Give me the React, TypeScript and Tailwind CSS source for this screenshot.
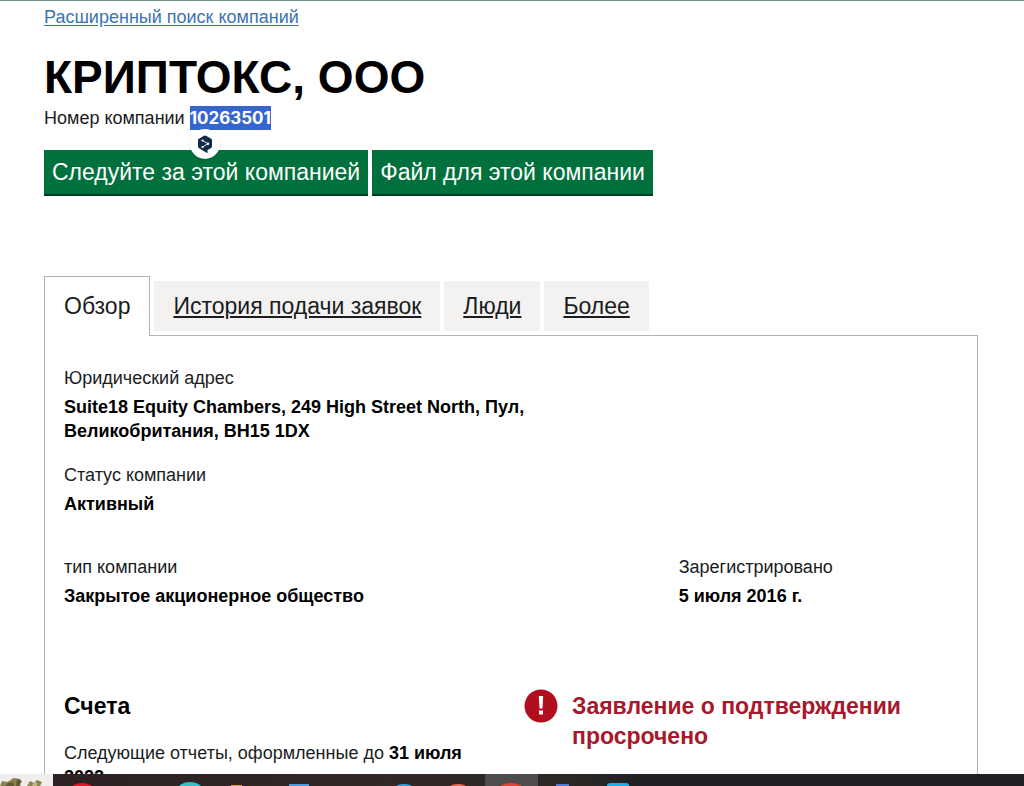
import type { ReactNode } from 'react';

const tabs = ['История подачи заявок', 'Люди', 'Более'];

function Field({ label, children }: { label: string; children: ReactNode }) {
    return (
        <dl>
            <dt className="mb-[5px] text-lg leading-6">{label}</dt>
            <dd className="text-lg leading-6 font-bold text-black">{children}</dd>
        </dl>
    );
}

function ActionButton({ children }: { children: ReactNode }) {
    return (
        <button
            type="button"
            className="h-[46px] border-b-2 border-[#00401f] bg-[#00703c] px-2 text-[23px] whitespace-nowrap text-white"
        >
            {children}
        </button>
    );
}

function TranslateBadge() {
    return (
        <button
            type="button"
            aria-label="Перевести"
            className="absolute top-[23px] left-0 flex h-[30px] w-[30px] items-center justify-center rounded-full bg-white shadow-sm"
        >
            <svg viewBox="0 0 16 19" className="h-[19px] w-4">
                <path
                    d="M7 .7a2 2 0 0 1 2 0l5.200 3a1.600 1.600 0 0 1 .8 1.400v6.400a1.600 1.600 0 0 1-.8 1.400L10.500 15v3.300L7 16.200l-5.200-3.200a1.600 1.600 0 0 1-.8-1.400V5.100a1.600 1.600 0 0 1 .8-1.400z"
                    fill="#0f2b46"
                />
                <path d="M5.500 5.500l5.500 3.200-5.500 3.300" fill="none" stroke="#fff" strokeWidth="0.9" />
                <circle cx="5.500" cy="5.500" r="1.100" fill="#fff" />
                <circle cx="11" cy="8.700" r="1.200" fill="#fff" />
                <circle cx="5.500" cy="12" r="1.100" fill="#fff" />
            </svg>
        </button>
    );
}

function Taskbar() {
    return (
        <footer className="flex h-3 shrink-0 bg-[#1f2024]">
            <svg viewBox="0 0 640 12" className="h-3 w-[640px] shrink-0">
                <defs>
                    <linearGradient id="bar">
                        <stop offset="0" stopColor="#2c2023" />
                        <stop offset="0.6" stopColor="#302824" />
                        <stop offset="0.9" stopColor="#2b2725" />
                        <stop offset="1" stopColor="#1f2024" />
                    </linearGradient>
                </defs>
                <rect width="640" height="12" fill="url(#bar)" />
                <rect width="53" height="12" fill="#eeeeec" />
                <path d="M0 12l2-5 5 1 4-2 2-2 8 1-3 3 3 4z" fill="#8b8250" />
                <path d="M5 12l3-3 5-1 1 4zM17 5l5 2-3 5h-3z" fill="#5f5a33" />
                <path d="M27 12l3-5 4 2 3-3 5 2-2 4z" fill="#8b8250" />
                <path d="M32 12l2-4 3 1v3z" fill="#c1b680" />
                <rect x="485" width="53" height="12" fill="#4d4b4b" />
                <ellipse cx="82" cy="15" rx="11" ry="6" fill="#e3152b" />
                <ellipse cx="190" cy="15" rx="12" ry="7" fill="#36bfc8" />
                <rect x="231" y="11" width="11" height="1" fill="#e1a83c" />
                <rect x="289" y="10" width="20" height="2" fill="#4c9be0" />
                <ellipse cx="404" cy="15" rx="10" ry="5" fill="#2f9fdb" />
                <ellipse cx="458" cy="15" rx="10" ry="5" fill="#e8694d" />
                <ellipse cx="511" cy="15" rx="12" ry="6" fill="#e34334" />
                <rect x="556" y="10" width="13" height="2" fill="#4f7bd8" />
                <rect x="607" y="9" width="22" height="6" rx="3" fill="#18aeed" />
            </svg>
        </footer>
    );
}

export default function App() {
    return (
        <div className="flex h-screen flex-col bg-white font-['Liberation_Sans',Arial,sans-serif] text-[#1a1c1d]">
            <main className="min-h-0 flex-1 overflow-hidden border-t border-[#6f8f83] pr-[46px] pl-11">
                <a href="#search" className="mt-1 block w-fit text-lg leading-6 text-[#3b73af] underline underline-offset-2">
                    Расширенный поиск компаний
                </a>

                <h1 className="mt-5 text-[46px] leading-14 font-bold text-black">КРИПТОКС, ООО</h1>
                <p className="mt-px flex gap-[5px] text-lg leading-6">
                    Номер компании
                    <strong className="relative bg-[#3566cd] font-['Inter','Liberation_Sans',sans-serif] text-[17px] text-white">
                        10263501
                        <TranslateBadge />
                    </strong>
                </p>

                <div className="mt-5 flex gap-1">
                    <ActionButton>Следуйте за этой компанией</ActionButton>
                    <ActionButton>Файл для этой компании</ActionButton>
                </div>

                <nav className="mt-20 flex items-end gap-1">
                    <a
                        href="#overview"
                        className="z-10 -mb-px flex h-[60px] items-center border border-b-0 border-[#b1b4b6] bg-white px-[19px] text-[23px]"
                    >
                        Обзор
                    </a>
                    {tabs.map((tab) => (
                        <a
                            key={tab}
                            href="#tab"
                            className="mb-1 flex h-[50px] items-center bg-[#f3f2f1] px-[19px] text-[23px] whitespace-nowrap underline underline-offset-2"
                        >
                            {tab}
                        </a>
                    ))}
                </nav>

                <section className="border border-[#b1b4b6] px-[19px] pt-[30px] pb-10">
                    <div className="flex max-w-[480px] flex-col gap-5">
                        <Field label="Юридический адрес">
                            Suite18 Equity Chambers, 249 High Street North, Пул, Великобритания, BH15 1DX
                        </Field>
                        <Field label="Статус компании">Активный</Field>
                    </div>

                    <div className="mt-[39px] grid grid-cols-[2fr_1fr] gap-x-5">
                        <Field label="тип компании">Закрытое акционерное общество</Field>
                        <div className="pl-3">
                            <Field label="Зарегистрировано">5 июля 2016 г.</Field>
                        </div>
                    </div>

                    <div className="mt-20 grid grid-cols-[460px_1fr]">
                        <div className="pr-10">
                            <h2 className="text-[23px] leading-9 font-bold text-black">Счета</h2>
                            <p className="mt-[17px] text-lg leading-6">
                                Следующие отчеты, оформленные до <strong className="text-black">31 июля 2022</strong>
                            </p>
                        </div>
                        <div className="flex items-start gap-[14px] pt-px">
                            <svg viewBox="0 0 34 34" className="h-[34px] w-[34px] shrink-0">
                                <circle cx="17" cy="17" r="16.500" fill="#b10e1e" />
                                <path d="M14.800 7h4.400l-.7 12.500h-3z" fill="#fff" />
                                <rect x="15" y="21.500" width="4" height="4" fill="#fff" />
                            </svg>
                            <h2 className="pt-0.5 text-[23px] leading-[30px] font-bold text-[#a8182b]">
                                Заявление о подтверждении просрочено
                            </h2>
                        </div>
                    </div>
                </section>
            </main>
            <Taskbar />
        </div>
    );
}
